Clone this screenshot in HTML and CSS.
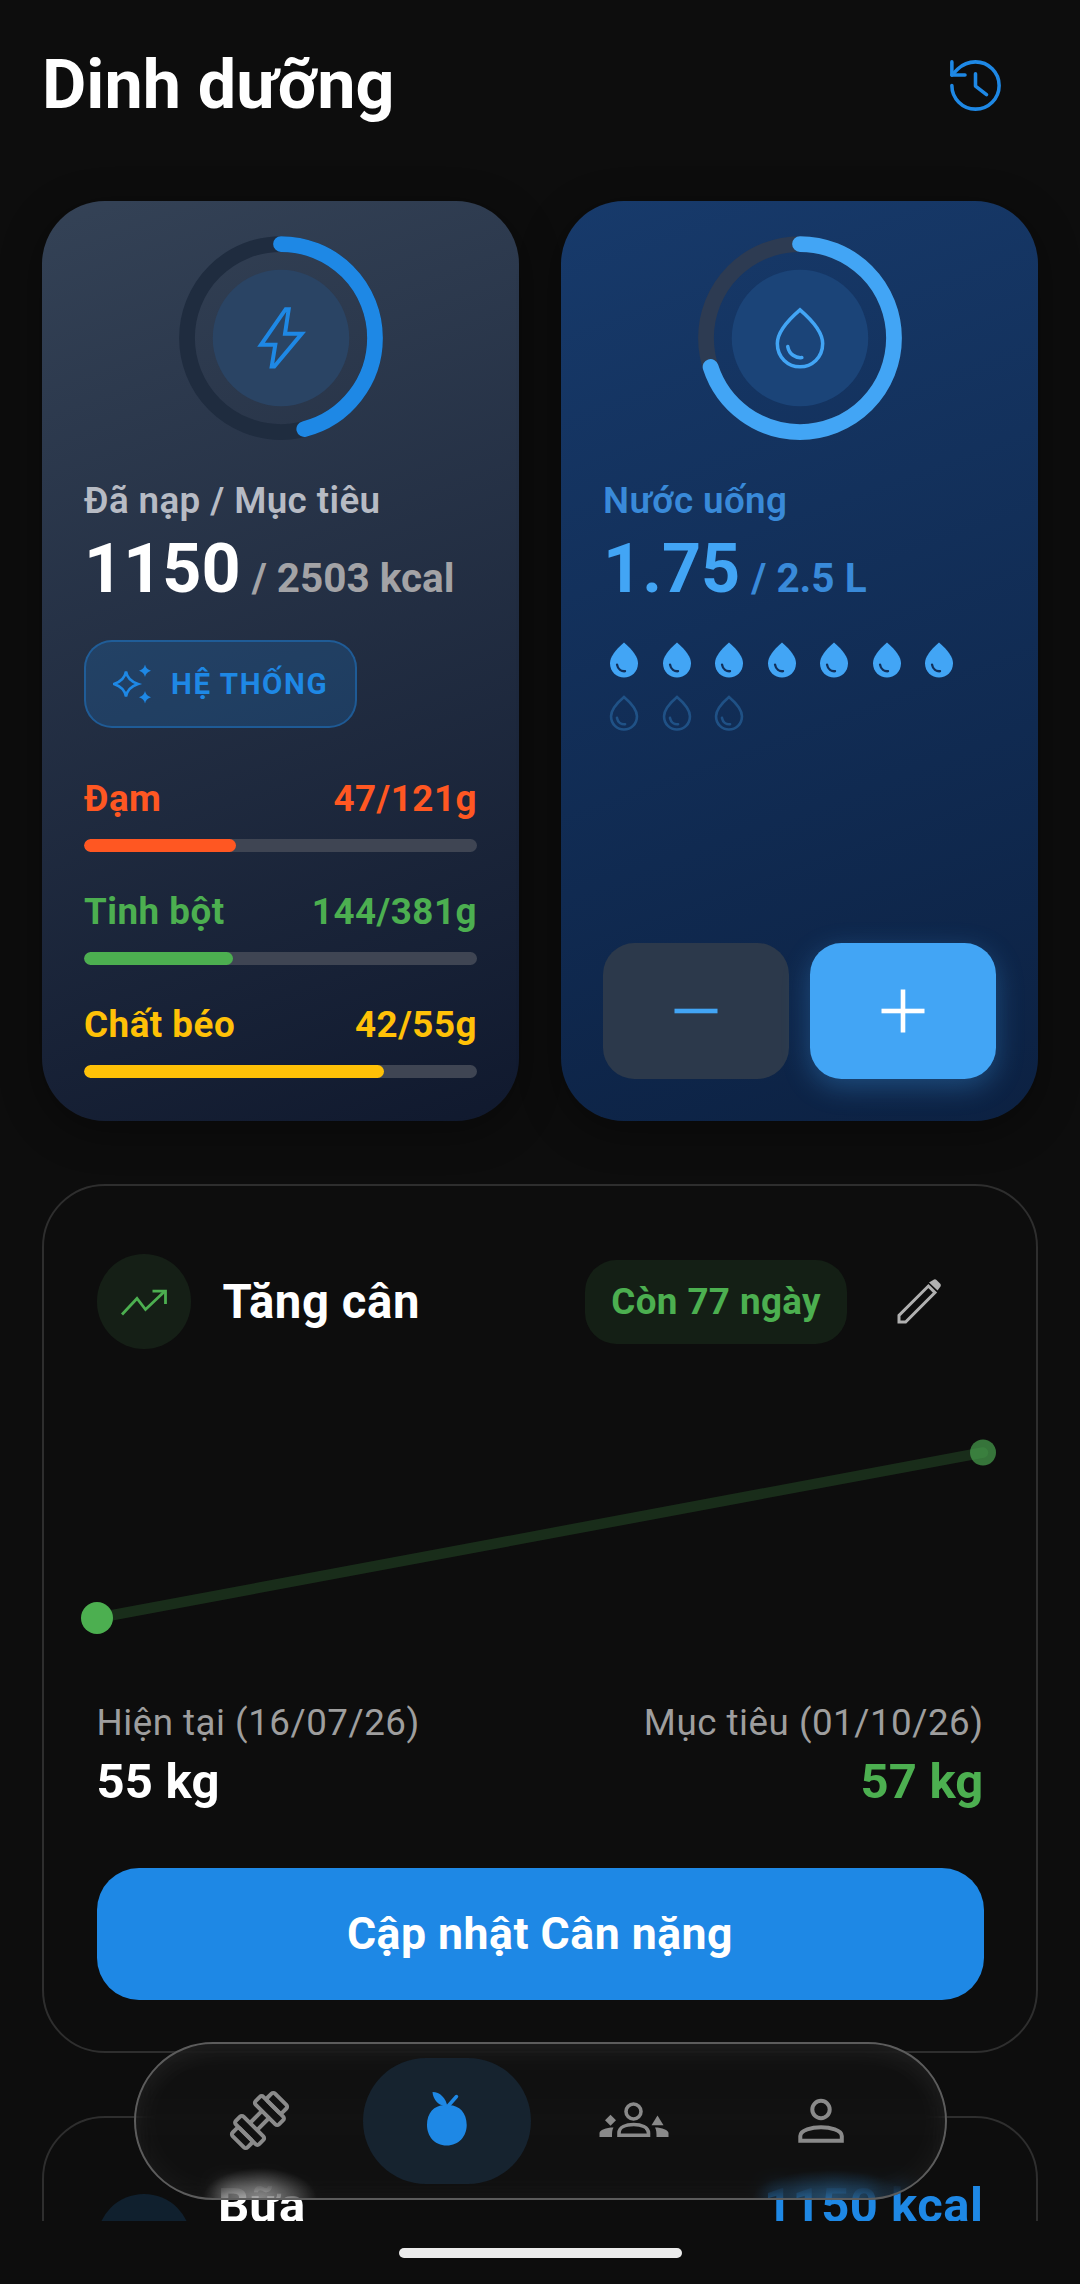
FILE: index.html
```html
<!DOCTYPE html>
<html lang="vi">
<head>
<meta charset="utf-8">
<title>Dinh dưỡng</title>
<link rel="stylesheet" href="styles.css">
</head>
<body>
<svg class="defs" width="0" height="0">
  <symbol id="drop-fill" viewBox="0 0 24 24"><path d="M12,2c-5.33,4.55-8,8.48-8,11.8c0,4.98,3.8,8.2,8,8.2s8-3.22,8-8.2C20,10.48,17.33,6.55,12,2z"/><path d="M8 14.6C8.5 17.4 10.6 18.6 12.6 18.4" fill="none" stroke="#11305b" stroke-width="1.3" stroke-linecap="round"/></symbol>
  <symbol id="drop-line" viewBox="0 0 24 24"><path fill="none" d="M12 2.8C7.1 7 4.6 10.7 4.6 13.8 4.6 18.4 8.1 21.4 12 21.4S19.4 18.4 19.4 13.8C19.4 10.7 16.9 7 12 2.8Z"/><path fill="none" stroke-linecap="round" d="M8 14.8C8.5 17.4 10.6 18.6 12.6 18.4"/></symbol>
</svg>
<div class="app">
  <main class="scroll">
    <header class="top">
      <h1 class="title">Dinh dưỡng</h1>
      <button class="icon-btn history">
        <svg width="63" height="63" viewBox="0 0 24 24" fill="none" stroke="#1e88e5" stroke-width="1.35" stroke-linecap="round" stroke-linejoin="round"><path d="M3 12a9 9 0 1 0 9-9 9.75 9.75 0 0 0-6.74 2.74L3 8"/><path d="M3 3v5h5"/><path d="M12 7.5v4.7l4.2 3.3"/></svg>
      </button>
    </header>

    <section class="stat-grid">
      <article class="stat calories">
        <svg class="ring" width="210" height="210" viewBox="0 0 210 210" fill="none">
          <circle cx="105" cy="105" r="94" stroke="#1f2c3f" stroke-width="15.75"/>
          <circle cx="105" cy="105" r="94" stroke="#1e88e5" stroke-width="15.75" stroke-linecap="round" pathLength="100" stroke-dasharray="46 100" transform="rotate(-90 105 105)"/>
          <circle cx="105" cy="105" r="68.25" fill="#2a4464"/>
          <polygon points="109.7,76.2 112.7,76.2 109,100.8 125.7,100.8 98.3,133.5 95.7,133.5 99.3,111.8 85,111.8" stroke="#1e88e5" stroke-width="4" stroke-linejoin="miter"/>
        </svg>
        <p class="stat-label">Đã nạp / Mục tiêu</p>
        <p class="stat-value"><span class="big">1150</span><span class="rest">/ 2503 kcal</span></p>
        <div class="system">
          <svg width="42" height="42" viewBox="0 0 42 42" fill="#1e88e5">
            <path d="M13 8.5 Q14.5 17.5 25 21 Q14.5 24.5 13 33.5 Q11.5 24.5 1 21 Q11.5 17.5 13 8.5Z" fill="none" stroke="#1e88e5" stroke-width="2.6" stroke-linejoin="miter"/>
            <path d="M32 1.5 Q33 6.5 38 7.7 Q33 9 32 14 Q31 9 26 7.7 Q31 6.5 32 1.5Z"/>
            <path d="M32 28 Q33 33 38 34.2 Q33 35.5 32 40.5 Q31 35.5 26 34.2 Q31 33 32 28Z"/>
          </svg>
          <span>HỆ THỐNG</span>
        </div>
        <div class="macros">
          <div class="macro protein">
            <div class="macro-row"><span>Đạm</span><span>47/121g</span></div>
            <div class="track"><div class="fill" style="width:38.8%"></div></div>
          </div>
          <div class="macro carbs">
            <div class="macro-row"><span>Tinh bột</span><span>144/381g</span></div>
            <div class="track"><div class="fill" style="width:37.8%"></div></div>
          </div>
          <div class="macro fat">
            <div class="macro-row"><span>Chất béo</span><span>42/55g</span></div>
            <div class="track"><div class="fill" style="width:76.4%"></div></div>
          </div>
        </div>
      </article>

      <article class="stat water">
        <svg class="ring" width="210" height="210" viewBox="0 0 210 210" fill="none">
          <circle cx="105" cy="105" r="94" stroke="#2d3b52" stroke-width="15.75"/>
          <circle cx="105" cy="105" r="94" stroke="#42a5f5" stroke-width="15.75" stroke-linecap="round" pathLength="100" stroke-dasharray="70 100" transform="rotate(-90 105 105)"/>
          <circle cx="105" cy="105" r="68.25" fill="#1b4478"/>
          <svg x="68.25" y="68.25" width="73.5" height="73.5" stroke="#42a5f5" stroke-width="1.15"><use href="#drop-line"/></svg>
        </svg>
        <p class="stat-label">Nước uống</p>
        <p class="stat-value"><span class="big">1.75</span><span class="rest">/ 2.5 L</span></p>
        <div class="drops">
          <svg class="drop on"><use href="#drop-fill"/></svg>
          <svg class="drop on"><use href="#drop-fill"/></svg>
          <svg class="drop on"><use href="#drop-fill"/></svg>
          <svg class="drop on"><use href="#drop-fill"/></svg>
          <svg class="drop on"><use href="#drop-fill"/></svg>
          <svg class="drop on"><use href="#drop-fill"/></svg>
          <svg class="drop on"><use href="#drop-fill"/></svg>
          <svg class="drop off"><use href="#drop-line"/></svg>
          <svg class="drop off"><use href="#drop-line"/></svg>
          <svg class="drop off"><use href="#drop-line"/></svg>
        </div>
        <div class="water-btns">
          <button class="wbtn minus"><svg width="46" height="46" viewBox="0 0 46 46"><rect x="1.5" y="20.7" width="43" height="4.6" fill="#42a5f5"/></svg></button>
          <button class="wbtn plus"><svg width="46" height="46" viewBox="0 0 46 46" fill="#fff"><rect x="1.5" y="20.7" width="43" height="4.6"/><rect x="20.7" y="1.5" width="4.6" height="43"/></svg></button>
        </div>
      </article>
    </section>

    <section class="goal">
      <div class="goal-head">
        <div class="goal-ic">
          <svg width="52" height="52" viewBox="0 0 52 52" fill="none" stroke="#4caf50" stroke-width="2.8"><path d="M4 38.5 19 22.5 27.5 33.5 46.5 15.5"/><path d="M34.5 15.2H47.5V28"/></svg>
        </div>
        <h2 class="goal-title">Tăng cân</h2>
        <span class="pill">Còn 77 ngày</span>
        <button class="icon-btn edit">
          <svg width="63" height="63" viewBox="0 0 63 63" fill="none" stroke="#b0b0b0" stroke-width="3"><path d="M10 52H16.6L46 22.6 39.4 16 10 45.4Z" stroke-linejoin="miter"/><path d="M40 12.5 45 9.5Q46.5 9 47.5 10L51.5 14Q52.3 15.3 51.5 16.5L48.5 20.5Z" fill="#b0b0b0" stroke="none"/></svg>
        </button>
      </div>
      <div class="chart">
        <svg width="886" height="336" viewBox="0 0 886 336" fill="none">
          <circle cx="886" cy="87.5" r="13" fill="#36743a"/>
          <line x1="0" y1="253" x2="886" y2="87.5" stroke="#4caf50" stroke-opacity=".2" stroke-width="10.5" stroke-linecap="round"/>
          <circle cx="0" cy="253" r="16" fill="#4caf50"/>
        </svg>
      </div>
      <div class="weights">
        <div class="weight"><span class="w-label">Hiện tại (16/07/26)</span><strong class="w-value">55 kg</strong></div>
        <div class="weight end"><span class="w-label">Mục tiêu (01/10/26)</span><strong class="w-value green">57 kg</strong></div>
      </div>
      <button class="update">Cập nhật Cân nặng</button>
    </section>

    <section class="meals">
      <div class="meal-ic"></div>
      <h2 class="meal-title">Bữa</h2>
      <span class="meal-kcal">1150 kcal</span>
    </section>
  </main>

  <nav class="nav">
    <div class="nav-item">
      <svg width="63" height="63" viewBox="0 0 63 63" fill="none" stroke="#8a8a8a" stroke-width="4" stroke-linejoin="round">
        <g transform="rotate(-45 31.5 31.5)">
          <rect x="12" y="15" width="11" height="33" rx="2.5"/>
          <rect x="40" y="15" width="11" height="33" rx="2.5"/>
          <rect x="1.5" y="21" width="10.5" height="21" rx="2.5"/>
          <rect x="51" y="21" width="10.5" height="21" rx="2.5"/>
          <path d="M23 26.5H40M23 36.5H40"/>
        </g>
      </svg>
    </div>
    <div class="nav-item active">
      <svg width="63" height="63" viewBox="0 0 63 63" fill="#1e88e5">
        <path d="M31.7 16.5C43 15 51.7 23 51.7 36 51.7 47 44 56.5 31.7 56.5 19.5 56.5 12 47 12 36 12 23 20.5 15 31.7 16.5Z"/>
        <path d="M17.5 3C25 3 31 9 32.5 18 24 17 18 11 17.5 3Z"/>
        <path d="M32.7 17.5 41.5 7.5" fill="none" stroke="#1e88e5" stroke-width="3.5" stroke-linecap="round"/>
      </svg>
    </div>
    <div class="nav-item">
      <svg width="84" height="63" viewBox="0 0 84 63" fill="#8a8a8a">
        <circle cx="41.5" cy="22.5" r="7.5" fill="none" stroke="#8a8a8a" stroke-width="3.6"/>
        <path d="M27 46.2V44C27 38 34 35.5 41.7 35.5 49 35.5 56.5 38 56.5 44V46.2Z" fill="none" stroke="#8a8a8a" stroke-width="3.6"/>
        <path d="M18.5 25.7 24 31.2 18.5 36.7 13 31.2Z"/>
        <path d="M65.5 26.5 71.5 36.2H59.5Z"/>
        <path d="M7.5 48V44C7.5 41 14 38.5 21.5 38.5 20 41 20 44 20 48Z"/>
        <path d="M76.5 48V44C76.5 41 70 38.5 63 38.5 64.5 41 64.5 44 64.5 48Z"/>
      </svg>
    </div>
    <div class="nav-item">
      <svg width="63" height="63" viewBox="0 0 63 63" fill="none" stroke="#8a8a8a" stroke-width="4">
        <circle cx="31" cy="20.5" r="8.7"/>
        <path d="M10.3 51.8V47C10.3 41 22 38.2 31 38.2 40 38.2 51.8 41 51.8 47V51.8Z"/>
      </svg>
    </div>
  </nav>

  <div class="home-bar"><span class="home-ind"></span></div>
</div>
</body>
</html>
```

FILE: styles.css
```css
* { box-sizing: border-box; }
html, body { margin: 0; padding: 0; background: #0d0d0d; }
body { font-family: Roboto, "Noto Sans", sans-serif; color: #fff; }
p, h1, h2 { margin: 0; }
button { font: inherit; border: 0; padding: 0; background: none; color: inherit; }
.defs { position: absolute; }

.app { position: relative; width: 1080px; height: 2284px; overflow: hidden; display: flex; flex-direction: column; background: #0d0d0d; }
.scroll { height: 2221px; overflow: hidden; padding: 22px 42px 0; flex: none; }

.top { display: flex; align-items: center; justify-content: space-between; height: 126px; margin-bottom: 53px; }
.title { font-size: 68.25px; font-weight: 700; line-height: 80px; }
.icon-btn { width: 126px; height: 126px; display: flex; align-items: center; justify-content: center; flex: none; }

.stat-grid { display: grid; grid-template-columns: 477px 477px; column-gap: 42px; }
.stat { height: 920px; border-radius: 63px; padding: 31.5px 42px 42px; display: flex; flex-direction: column; box-shadow: 0 10px 40px rgba(0,0,0,.35); }
.stat > * { flex: none; }
.calories { background: linear-gradient(160deg, #344256 0%, #10192e 100%); }
.water { background: linear-gradient(160deg, #173a6b 0%, #0c2142 100%); }
.ring { display: block; align-self: center; }

.stat-label { font-size: 36.75px; line-height: 43px; font-weight: 600; letter-spacing: .4px; margin-top: 36px; color: #b7bbc4; }
.stat-value { display: flex; align-items: baseline; gap: 11px; height: 74px; margin-top: 10.5px; line-height: 74px; }
.big { font-size: 68.25px; font-weight: 700; }
.rest { font-size: 40.5px; font-weight: 700; color: #a3a3a6; }
.water .stat-label, .water .rest { color: #398ad9; }
.water .big { color: #42a5f5; }

.system { width: 273px; height: 88px; margin-top: 33.5px; border: 2.6px solid rgba(30,136,229,.4); border-radius: 28px; background: rgba(30,136,229,.2); display: flex; align-items: center; padding-left: 27px; gap: 16px; color: #1e88e5; font-size: 29.5px; font-weight: 700; letter-spacing: 1.6px; }

.macros { margin-top: 49px; display: flex; flex-direction: column; gap: 38px; }
.macro-row { display: flex; justify-content: space-between; font-size: 36.75px; line-height: 43px; font-weight: 700; letter-spacing: .5px; }
.track { height: 13.1px; margin-top: 19px; background: #3f4553; border-radius: 7px; overflow: hidden; }
.fill { height: 100%; border-radius: 7px; }
.protein .macro-row { color: #ff5722; } .protein .fill { background: #ff5722; }
.carbs .macro-row { color: #4caf50; } .carbs .fill { background: #4caf50; }
.fat .macro-row { color: #ffc107; } .fat .fill { background: #ffc107; }

.drops { margin-top: 33px; display: flex; flex-wrap: wrap; gap: 11px 10.5px; }
.drop { width: 42px; height: 42px; display: block; }
.drop.on { fill: #42a5f5; }
.drop.off { stroke: rgba(66,165,245,.3); stroke-width: 1.5; }
.water-btns { margin-top: auto; display: flex; gap: 21px; }
.wbtn { width: 186px; height: 136px; border-radius: 31.5px; display: flex; align-items: center; justify-content: center; }
.minus { background: #2c394b; }
.plus { background: #42a5f5; box-shadow: 0 8px 28px rgba(66,165,245,.32); }

.goal { margin-top: 63px; height: 869px; border: 2.6px solid #2e2e2e; border-radius: 63px; padding: 52.5px 52.5px 0; }
.goal-head { display: flex; align-items: center; height: 126px; }
.goal-ic { width: 94.5px; height: 94.5px; border-radius: 50%; background: #151f16; display: flex; align-items: center; justify-content: center; flex: none; }
.goal-title { font-size: 47.25px; font-weight: 700; letter-spacing: .6px; margin-left: 31.5px; flex: 1; }
.pill { height: 84px; padding: 0 26px; border-radius: 31.5px; background: #141f15; color: #4caf50; font-size: 36.75px; font-weight: 700; letter-spacing: .4px; display: flex; align-items: center; margin-right: 10.5px; }
.chart { height: 336px; }
.chart svg { display: block; overflow: visible; }
.weights { display: flex; justify-content: space-between; }
.weight { display: flex; flex-direction: column; }
.weight.end { align-items: flex-end; }
.w-label { font-size: 36.75px; line-height: 43px; letter-spacing: .5px; color: #9e9e9e; }
.w-value { font-size: 49px; line-height: 55px; font-weight: 700; letter-spacing: .2px; margin-top: 10px; }
.green { color: #4caf50; }
.update { display: block; width: 100%; height: 132px; margin-top: 59px; border-radius: 42px; background: #1e88e5; font-size: 44.6px; font-weight: 700; letter-spacing: .5px; color: #fff; }

.meals { margin-top: 63px; height: 300px; border: 2.6px solid #2e2e2e; border-radius: 63px; padding: 60.4px 52.5px 0; display: flex; align-items: flex-start; }
.meal-ic { width: 94.5px; height: 94.5px; border-radius: 50%; background: #10202e; margin-top: 16px; flex: none; }
.meal-title { font-size: 49px; line-height: 55px; font-weight: 700; margin-left: 27px; flex: 1; }
.meal-kcal { font-size: 49px; line-height: 55px; font-weight: 700; letter-spacing: .5px; color: #1e88e5; }

.nav { position: absolute; left: 134px; top: 2042px; width: 813px; height: 157.5px; border-radius: 79px; border: 2.6px solid #5c5c5c; padding: 0 39.4px; display: flex; align-items: center; justify-content: space-between; background: radial-gradient(ellipse 57px 30px at 124px 100%, rgba(255,255,255,.42), transparent), radial-gradient(ellipse 78px 28px at 694px 100%, rgba(66,165,245,.3), transparent), rgba(24,24,24,.35); backdrop-filter: blur(10px); box-shadow: inset 0 0 34px rgba(255,255,255,.05), inset 0 12px 24px rgba(255,255,255,.03); }
.nav-item { width: 168px; height: 126px; border-radius: 63px; display: flex; align-items: center; justify-content: center; }
.nav-item.active { background: #16232f; }

.home-bar { flex: 1; position: relative; }
.home-ind { position: absolute; left: 399px; top: 27px; width: 283px; height: 10px; border-radius: 5px; background: #ececec; }
```
